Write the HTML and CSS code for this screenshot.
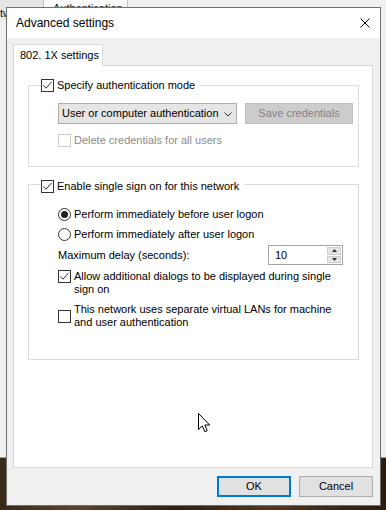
FILE: index.html
```html
<!DOCTYPE html>
<html lang="en">
<head>
	<meta charset="UTF-8">
	<title>Advanced settings</title>
	<link rel="stylesheet" href="styles.css">
</head>
<body>
<div class="desk">
	<!-- parent properties window behind the dialog -->
	<div class="backwin">
		<div class="backtabs">
			<span class="btab"><span class="clip">Networking</span></span>
			<span class="btab on">Authentication</span>
		</div>
	</div>

	<div class="dialog">
		<div class="titlebar">
			<span class="title">Advanced settings</span>
			<svg class="close" width="10" height="10" viewBox="0 0 10 10">
				<path d="M0.5 0.5L9.5 9.5M9.5 0.5L0.5 9.5" stroke="#000" stroke-width="1" fill="none"/>
			</svg>
		</div>
		<div class="body">
			<div class="tabs">
				<span class="tab">802. 1X settings</span>
			</div>
			<div class="page">
				<div class="group g1">
					<label class="head"><span class="cb checked"></span>Specify authentication mode</label>
					<div class="auth-row">
						<div class="select">
							<span>User or computer authentication</span>
							<svg width="8" height="5" viewBox="0 0 8 5"><path d="M0.5 0.5L4 4L7.5 0.5" stroke="#333" fill="none"/></svg>
						</div>
						<span class="btn off">Save credentials</span>
					</div>
					<label class="opt disabled"><span class="cb"></span>Delete credentials for all users</label>
				</div>

				<div class="group g2">
					<label class="head"><span class="cb checked"></span>Enable single sign on for this network</label>
					<label class="opt radio-row"><span class="rb on"></span>Perform immediately before user logon</label>
					<label class="opt radio-row"><span class="rb"></span>Perform immediately after user logon</label>
					<div class="delay-row">
						<span>Maximum delay (seconds):</span>
						<div class="spin">
							<span class="val">10</span>
							<span class="arrows">
								<span class="up"><svg width="5" height="3" viewBox="0 0 5 3"><path d="M2.5 0L5 3H0Z" fill="#333"/></svg></span>
								<span class="down"><svg width="5" height="3" viewBox="0 0 5 3"><path d="M0 0H5L2.5 3Z" fill="#333"/></svg></span>
							</span>
						</div>
					</div>
					<label class="opt multi first"><span class="cb checked"></span><span>Allow additional dialogs to be displayed during single<br>sign on</span></label>
					<label class="opt multi mid"><span class="cb"></span><span>This network uses separate virtual LANs for machine<br>and user authentication</span></label>
				</div>
			</div>
			<div class="buttons">
				<span class="btn push default">OK</span>
				<span class="btn push">Cancel</span>
			</div>
		</div>
	</div>

	<svg class="cursor" width="13" height="20" viewBox="0 0 13 20">
		<path d="M0.5 0.5V16.5L4.3 12.9L6.8 18.7L9.2 17.7L6.8 12H11.7Z" fill="#fff" stroke="#000" stroke-width="1" stroke-linejoin="miter"/>
	</svg>
</div>
</body>
</html>
```

FILE: styles.css
```css
* {
	box-sizing: border-box;
}
html, body {
	margin: 0;
	padding: 0;
}
body {
	width: 386px;
	height: 510px;
	overflow: hidden;
	font: 11px/13px "Liberation Sans", Arial, sans-serif;
	color: #000;
	background: linear-gradient(90deg, #3a2818 0%, #5a4430 20%, #2e2014 45%, #4c3826 70%, #2a1c10 100%);
}

.desk {
	position: relative;
	width: 386px;
	height: 510px;
	padding: 7px 0 0 6px;
}

/* window behind */
.backwin {
	position: absolute;
	left: 0;
	top: 0;
	width: 386px;
	height: 458px;
	background: #f0f0f0;
	border-bottom: 1px solid #9a9a9a;
}
.backtabs {
	display: flex;
	height: 20px;
}
.btab {
	width: 44px;
	padding: 7px 0 0 0;
	color: #222;
	background: #e6e6e6;
	border-right: 1px solid #c4c4c4;
	white-space: nowrap;
}
.btab .clip {
	display: block;
	width: 8px;
	overflow: hidden;
	text-indent: -14px;
}
.btab.on {
	width: 84px;
	padding: 2px 0 0 9px;
	background: #fafafa;
	overflow: hidden;
}

/* dialog */
.dialog {
	position: relative;
	width: 375px;
	height: 499px;
	border: 1px solid #707070;
	background: #f0f0f0;
	display: flex;
	flex-direction: column;
}
.titlebar {
	height: 30px;
	background: #fff;
	display: flex;
	align-items: center;
	justify-content: space-between;
	padding: 0 10px 0 9px;
}
.title {
	font-size: 12px;
}
.close {
	display: block;
}

.body {
	flex: 1;
	padding: 6px 7px 0 6px;
	display: flex;
	flex-direction: column;
}
.tabs {
	display: flex;
	height: 21px;
}
.tab {
	position: relative;
	z-index: 1;
	width: 90px;
	height: 22px;
	padding: 4px 0 0 6px;
	background: #fff;
	border: 1px solid #d9d9d9;
	border-bottom: 0;
}
.page {
	height: 403px;
	background: #fff;
	border: 1px solid #d9d9d9;
	padding: 19px 13px 0 14px;
}

.group {
	border: 1px solid #dcdcdc;
	padding: 0 0 0 29px;
}
.g1 {
	height: 82px;
}
.g2 {
	margin-top: 17px;
	height: 176px;
}
.head {
	display: flex;
	align-items: center;
	gap: 3px;
	width: max-content;
	height: 13px;
	margin: -7px 0 0 -17px;
	padding-right: 5px;
	background: #fff;
}
.g2 .head {
	margin-top: -5px;
}

/* check boxes and radios */
.cb, .rb {
	flex: none;
	width: 13px;
	height: 13px;
	border: 1px solid #333;
	background: #fff;
	display: inline-block;
	position: relative;
}
.cb.checked {
	background: #fff url("data:image/svg+xml,%3Csvg xmlns='http://www.w3.org/2000/svg' width='11' height='11' viewBox='0 0 11 11'%3E%3Cpath d='M1.3 5.3L4 8.2L9.6 1.9' stroke='%23333' stroke-width='1' fill='none'/%3E%3C/svg%3E") no-repeat center;
}
.rb {
	border-radius: 50%;
}
.rb.on::after {
	content: '';
	position: absolute;
	left: 2px;
	top: 2px;
	width: 7px;
	height: 7px;
	border-radius: 50%;
	background: #222;
}
.opt {
	display: flex;
	align-items: center;
	gap: 3px;
}
.disabled {
	color: #8b8b8b;
}
.disabled .cb {
	border-color: #cccccc;
}

.auth-row {
	display: flex;
	gap: 8px;
	margin-top: 11px;
}
.select {
	width: 179px;
	height: 21px;
	border: 1px solid #adadad;
	background: #e5e5e5;
	display: flex;
	align-items: center;
	justify-content: space-between;
	padding: 0 4px 0 3px;
}
.select svg {
	display: block;
	margin-top: 1px;
}
.btn {
	display: flex;
	align-items: center;
	justify-content: center;
	height: 21px;
}
.btn.off {
	width: 108px;
	background: #cccccc;
	border: 1px solid #bfbfbf;
	color: #838383;
}
.g1 .opt {
	margin-top: 10px;
}

.radio-row {
	height: 13px;
}
.g2 .head + .radio-row {
	margin-top: 15px;
}
.radio-row + .radio-row {
	margin-top: 7px;
}
.delay-row {
	display: flex;
	align-items: center;
	justify-content: space-between;
	margin-top: 4px;
	width: 285px;
}
.spin {
	width: 75px;
	height: 20px;
	border: 1px solid #a6a6a6;
	display: flex;
	background: #fff;
}
.spin .val {
	flex: 1;
	padding: 3px 0 0 6px;
}
.arrows {
	width: 16px;
	display: flex;
	flex-direction: column;
	gap: 1px;
	padding: 1px;
}
.arrows span {
	flex: 1;
	background: #e5e5e5;
	border: 1px solid #cfcfcf;
	display: flex;
	align-items: center;
	justify-content: center;
}
.arrows svg {
	display: block;
}
.multi {
	align-items: flex-start;
}
.multi.first {
	margin-top: 5px;
}
.multi.mid {
	align-items: center;
	margin-top: 7px;
}

.buttons {
	display: flex;
	justify-content: flex-end;
	gap: 8px;
	margin-top: 8px;
}
.btn.push {
	width: 74px;
	background: #e1e1e1;
	border: 1px solid #adadad;
}
.btn.default {
	border: 2px solid #0078d7;
}

.cursor {
	position: absolute;
	left: 198px;
	top: 413px;
}
```
